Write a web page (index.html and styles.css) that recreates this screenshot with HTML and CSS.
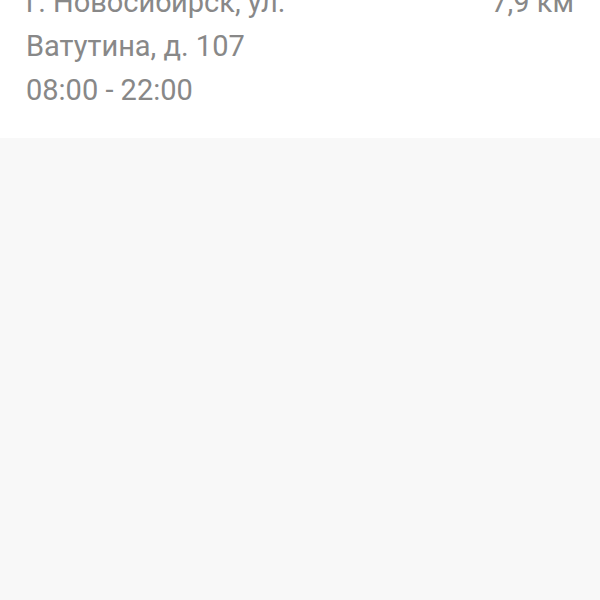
FILE: index.html
```html
<!DOCTYPE html>
<html lang="ru">
<head>
    <meta charset="UTF-8">
    <meta name="viewport" content="width=device-width, initial-scale=1.0">
    <title>Аптеки</title>
    <link rel="stylesheet" href="styles.css">
</head>
<body>

<div class="storeList">
    <!-- Store card -->
    <div class="storeCard">
        <div class="storeInfo">
            <p class="storeAddress">г. Новосибирск, ул. Ватутина, д. 107</p>
            <p class="storeHours">08:00 - 22:00</p>
        </div>
        <div class="storeDistance">7,9 км</div>
    </div>
</div>

</body>
</html>
```

FILE: styles.css
```css
/* Page background and store list */
html, body {
    margin: 0;
    padding: 0;
    background: #f8f8f8;
}
.storeList {
    font-family: Roboto, "Noto Sans", sans-serif;
    font-size: 29px;
    line-height: 44px;
    color: #888888;
}
.storeCard {
    display: flex;
    justify-content: space-between;
    margin-top: -46px;
    padding: 26px 26px 26px 26px;
    background: #ffffff;
}
.storeInfo {
    max-width: 360px;
}
.storeInfo p {
    margin: 0;
}
.storeDistance {
    white-space: nowrap;
}
```
